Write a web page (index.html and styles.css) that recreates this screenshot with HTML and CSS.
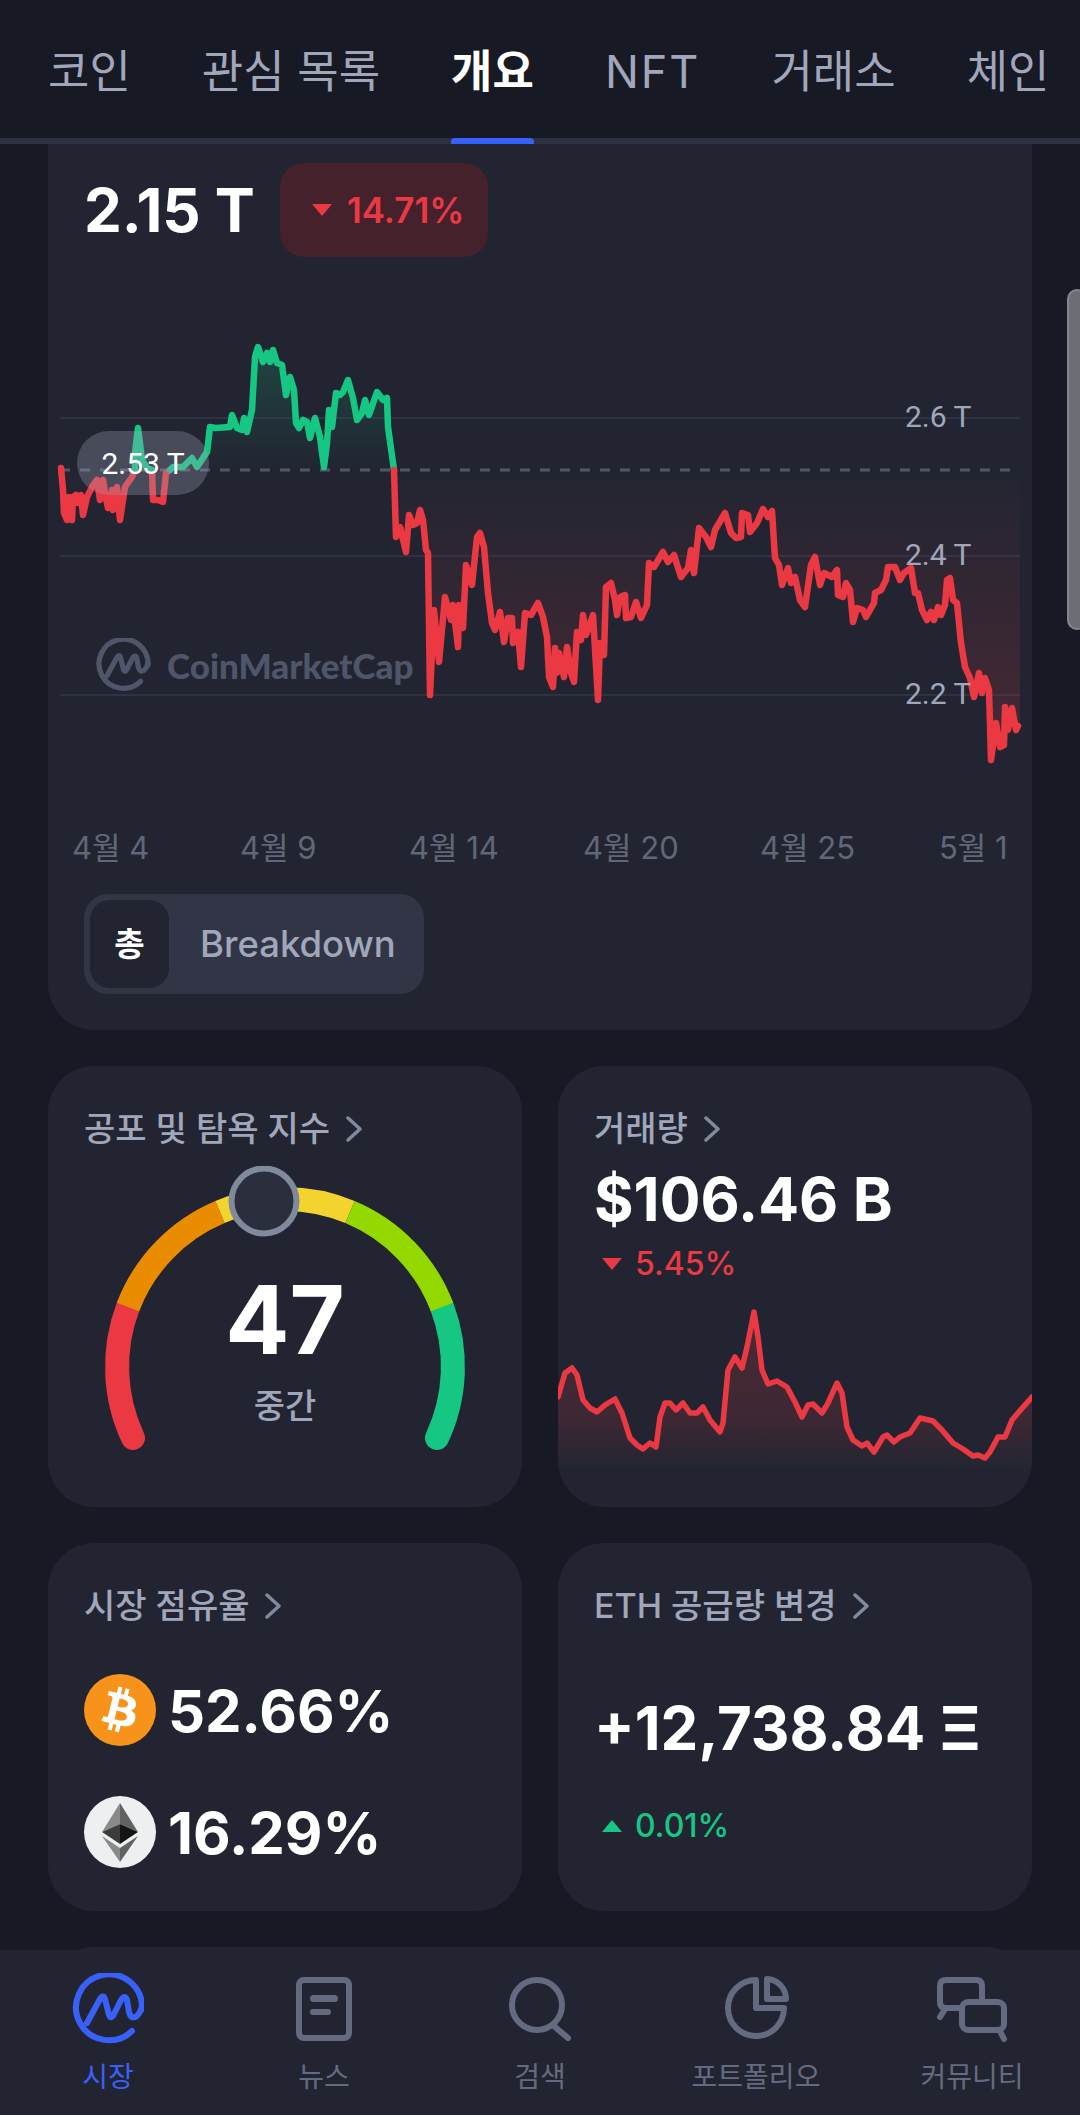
FILE: index.html
```html
<!DOCTYPE html>
<html lang="ko">
<head>
    <meta charset="UTF-8">
    <meta name="viewport" content="width=device-width, initial-scale=1.0">
    <title>개요</title>
    <link rel="stylesheet" href="styles.css">
</head>
<body>
<div class="page">
    <header class="tabs">
        <span class="tab">코인</span>
        <span class="tab">관심 목록</span>
        <span class="tab active">개요</span>
        <span class="tab latin">NFT</span>
        <span class="tab">거래소</span>
        <span class="tab">체인</span>
    </header>

    <main class="content">
        <section class="card cap-card">
            <div class="cap-head">
                <span class="cap-value">2.15 T</span>
                <span class="badge">
                    <svg class="tri" viewBox="0 0 22 14"><path d="M1 1H21L11 13Z" fill="#ea3943"/></svg>
                    14.71%
                </span>
            </div>

            <div class="chart">
                <svg class="chart-svg" viewBox="48 290 984 500">
                    <defs>
                        <linearGradient id="fillRed" gradientUnits="userSpaceOnUse" x1="0" y1="470" x2="0" y2="780">
                            <stop offset="0" stop-color="#ea3943" stop-opacity="0"/>
                            <stop offset="1" stop-color="#ea3943" stop-opacity=".2"/>
                        </linearGradient>
                        <linearGradient id="fillGreen" gradientUnits="userSpaceOnUse" x1="0" y1="347" x2="0" y2="470">
                            <stop offset="0" stop-color="#16c784" stop-opacity=".2"/>
                            <stop offset="1" stop-color="#16c784" stop-opacity="0"/>
                        </linearGradient>
                    </defs>
                    <g class="grid-lines">
                        <line x1="60" y1="418" x2="1020" y2="418"/>
                        <line x1="60" y1="556" x2="1020" y2="556"/>
                        <line x1="60" y1="695" x2="1020" y2="695"/>
                    </g>
                    <!-- red fill / green fill, then the lines -->
                    <polygon fill="url(#fillRed)" points="61,470 61,468 63,490 64,513 67,520 69,497 72,520 73,497 76,495 78,503 81,495 83,515 87,497 92,487 97,480 100,500 103,480 105,493 108,508 112,490 113,510 117,487 120,520 125,487 132,477 135,470"/>
                    <polygon fill="url(#fillRed)" points="152,470 153,500 158,500 163,502 166,473 170,470"/>
                    <polygon fill="url(#fillGreen)" points="135,470 135,453 138,428 142,460 147,468 152,470"/>
                    <polygon fill="url(#fillGreen)" points="170,470 173,467 183,467 192,458 197,467 207,452 210,427 215,428 230,427 232,415 237,428 242,430 244,418 247,432 252,410 255,357 258,347 263,362 267,353 270,362 273,350 277,363 282,365 286,395 290,377 294,390 296,423 299,428 303,420 307,422 310,438 315,418 320,437 324,467 327,443 329,410 332,427 336,393 340,395 343,392 348,380 353,398 357,420 362,413 365,400 369,415 377,392 383,400 387,398 388,427 394,470"/>
                    <polygon fill="url(#fillRed)" points="394,470 396,537 400,527 406,552 409,515 413,525 417,523 420,510 423,520 426,550 428,553 430,695 434,610 439,662 445,597 451,620 453,605 458,647 459,605 463,628 466,565 472,585 477,537 480,533 484,547 488,593 492,623 495,630 500,612 504,642 508,618 512,618 513,643 518,632 521,667 525,613 531,615 538,603 543,617 547,637 549,677 553,687 555,648 557,673 559,653 564,677 567,647 571,673 574,682 577,632 581,640 583,615 586,635 593,615 598,700 600,643 604,655 606,587 611,583 615,600 617,615 620,597 625,595 626,618 631,617 636,602 641,618 647,605 649,563 654,567 663,552 668,562 674,555 681,577 688,568 691,550 694,573 699,528 706,537 711,547 715,530 725,513 731,533 736,538 741,537 742,513 748,515 750,532 757,523 763,509 768,517 772,511 775,558 779,565 782,585 788,568 791,583 795,577 800,600 805,607 811,565 815,557 820,585 824,573 832,577 837,570 838,595 843,597 846,583 850,590 853,622 857,608 863,610 866,617 874,603 875,593 881,590 886,580 888,567 895,567 900,580 904,573 911,568 915,593 918,593 922,610 927,620 931,612 934,620 938,607 941,615 945,605 947,580 950,578 953,600 957,603 961,643 965,667 970,678 974,697 979,673 982,693 985,678 989,690 991,760 996,723 1000,747 1004,745 1005,707 1008,730 1012,708 1016,730 1020,723 1020,470"/>
                    <line class="base-line" x1="60" y1="470" x2="1010" y2="470"/>
                    <polyline class="line red" points="61,468 63,490 64,513 67,520 69,497 72,520 73,497 76,495 78,503 81,495 83,515 87,497 92,487 97,480 100,500 103,480 105,493 108,508 112,490 113,510 117,487 120,520 125,487 132,477 135,470"/>
                    <polyline class="line red" points="152,470 153,500 158,500 163,502 166,473 170,470"/>
                    <polyline class="line green" points="135,470 135,453 138,428 142,460 147,468 152,470"/>
                    <polyline class="line green" points="170,470 173,467 183,467 192,458 197,467 207,452 210,427 215,428 230,427 232,415 237,428 242,430 244,418 247,432 252,410 255,357 258,347 263,362 267,353 270,362 273,350 277,363 282,365 286,395 290,377 294,390 296,423 299,428 303,420 307,422 310,438 315,418 320,437 324,467 327,443 329,410 332,427 336,393 340,395 343,392 348,380 353,398 357,420 362,413 365,400 369,415 377,392 383,400 387,398 388,427 394,470"/>
                    <polyline class="line red" points="394,470 396,537 400,527 406,552 409,515 413,525 417,523 420,510 423,520 426,550 428,553 430,695 434,610 439,662 445,597 451,620 453,605 458,647 459,605 463,628 466,565 472,585 477,537 480,533 484,547 488,593 492,623 495,630 500,612 504,642 508,618 512,618 513,643 518,632 521,667 525,613 531,615 538,603 543,617 547,637 549,677 553,687 555,648 557,673 559,653 564,677 567,647 571,673 574,682 577,632 581,640 583,615 586,635 593,615 598,700 600,643 604,655 606,587 611,583 615,600 617,615 620,597 625,595 626,618 631,617 636,602 641,618 647,605 649,563 654,567 663,552 668,562 674,555 681,577 688,568 691,550 694,573 699,528 706,537 711,547 715,530 725,513 731,533 736,538 741,537 742,513 748,515 750,532 757,523 763,509 768,517 772,511 775,558 779,565 782,585 788,568 791,583 795,577 800,600 805,607 811,565 815,557 820,585 824,573 832,577 837,570 838,595 843,597 846,583 850,590 853,622 857,608 863,610 866,617 874,603 875,593 881,590 886,580 888,567 895,567 900,580 904,573 911,568 915,593 918,593 922,610 927,620 931,612 934,620 938,607 941,615 945,605 947,580 950,578 953,600 957,603 961,643 965,667 970,678 974,697 979,673 982,693 985,678 989,690 991,760 996,723 1000,747 1004,745 1005,707 1008,730 1012,708 1016,730 1018,726"/>
                </svg>
                <span class="y-label y-26">2.6 T</span>
                <span class="y-label y-24">2.4 T</span>
                <span class="y-label y-22">2.2 T</span>
                <span class="start-pill">2.53 T</span>
                <div class="watermark">
                    <svg class="wm-logo" viewBox="0 0 74 72">
                        <path d="M70 36A33 33 0 1 0 60 58"/>
                        <path d="M15 50L28 26Q31 21 33 26L37 42Q39 47 42 41L49 27Q53 21 55 27L57 39Q59 47 65 43Q69 39 70 33"/>
                    </svg>
                    <span class="wm-text">CoinMarketCap</span>
                </div>
            </div>

            <div class="axis">
                <span>4월 4</span>
                <span>4월 9</span>
                <span>4월 14</span>
                <span>4월 20</span>
                <span>4월 25</span>
                <span>5월 1</span>
            </div>

            <div class="toggle">
                <span class="toggle-on">총</span>
                <span class="toggle-off">Breakdown</span>
            </div>
        </section>

        <div class="row row-tall">
            <section class="card gauge-card">
                <h2 class="card-title">공포 및 탐욕 지수
                    <svg class="chev" viewBox="0 0 16 26"><path d="M2 2L14 13L2 24" /></svg>
                </h2>
                <div class="gauge">
                    <svg class="gauge-svg" viewBox="48 1166 474 300">
                        <g fill="none" stroke-width="24">
                            <path d="M133 1438A168 168 0 0 1 128 1307" stroke="#ea3943" stroke-linecap="round"/>
                            <path d="M437 1438A168 168 0 0 0 442 1307" stroke="#16c784" stroke-linecap="round"/>
                            <path d="M128 1307A168 168 0 0 1 220 1212" stroke="#ea8c00"/>
                            <path d="M220 1212A168 168 0 0 1 350 1212" stroke="#f3d42f"/>
                            <path d="M350 1212A168 168 0 0 1 442 1307" stroke="#93d900"/>
                        </g>
                        <circle cx="264" cy="1201" r="32.5" fill="#2b2e3d" stroke="#808a9d" stroke-width="6"/>
                    </svg>
                    <div class="gauge-text">
                        <span class="gauge-num">47</span>
                        <span class="gauge-label">중간</span>
                    </div>
                </div>
            </section>

            <section class="card volume-card">
                <h2 class="card-title">거래량
                    <svg class="chev" viewBox="0 0 16 26"><path d="M2 2L14 13L2 24" /></svg>
                </h2>
                <div class="big-value">$106.46 B</div>
                <div class="change down">
                    <svg class="tri" viewBox="0 0 22 14"><path d="M1 1H21L11 13Z" fill="#ea3943"/></svg>
                    5.45%
                </div>
                <svg class="spark" viewBox="558 1300 474 207">
                    <defs>
                        <linearGradient id="sparkFill" gradientUnits="userSpaceOnUse" x1="0" y1="1330" x2="0" y2="1470">
                            <stop offset="0" stop-color="#ea3943" stop-opacity=".2"/>
                            <stop offset=".65" stop-color="#ea3943" stop-opacity=".13"/>
                            <stop offset="1" stop-color="#ea3943" stop-opacity="0"/>
                        </linearGradient>
                    </defs>
                    <polygon fill="url(#sparkFill)" points="558,1470 558,1397 565,1373 572,1368 577,1375 583,1400 590,1408 597,1412 605,1405 615,1399 622,1413 630,1438 637,1445 643,1449 650,1443 656,1447 660,1417 665,1403 670,1403 676,1410 683,1403 690,1413 697,1413 703,1407 710,1420 720,1432 723,1423 728,1370 735,1357 742,1368 747,1347 754,1312 758,1337 762,1370 768,1384 777,1381 787,1387 795,1402 802,1417 808,1405 813,1404 822,1413 828,1403 837,1383 842,1393 847,1427 853,1440 862,1446 867,1443 874,1452 883,1437 887,1435 894,1442 900,1437 910,1433 920,1418 933,1421 942,1430 953,1443 963,1449 973,1456 978,1455 985,1458 990,1452 998,1437 1005,1437 1012,1420 1018,1413 1032,1397 1032,1470"/>
                    <polyline class="spark-line" points="558,1397 565,1373 572,1368 577,1375 583,1400 590,1408 597,1412 605,1405 615,1399 622,1413 630,1438 637,1445 643,1449 650,1443 656,1447 660,1417 665,1403 670,1403 676,1410 683,1403 690,1413 697,1413 703,1407 710,1420 720,1432 723,1423 728,1370 735,1357 742,1368 747,1347 754,1312 758,1337 762,1370 768,1384 777,1381 787,1387 795,1402 802,1417 808,1405 813,1404 822,1413 828,1403 837,1383 842,1393 847,1427 853,1440 862,1446 867,1443 874,1452 883,1437 887,1435 894,1442 900,1437 910,1433 920,1418 933,1421 942,1430 953,1443 963,1449 973,1456 978,1455 985,1458 990,1452 998,1437 1005,1437 1012,1420 1018,1413 1032,1397"/>
                </svg>
            </section>
        </div>

        <div class="row row-short">
            <section class="card share-card">
                <h2 class="card-title">시장 점유율
                    <svg class="chev" viewBox="0 0 16 26"><path d="M2 2L14 13L2 24" /></svg>
                </h2>
                <div class="share-row">
                    <svg class="coin" viewBox="0 0 64 64">
                        <circle cx="32" cy="32" r="32" fill="#f7931a"/>
                        <path fill="#fff" d="M46.1 27.4c.6-4.3-2.6-6.6-7.1-8.1l1.5-5.8-3.5-.9-1.4 5.7c-.9-.2-1.9-.4-2.8-.7l1.4-5.7-3.6-.9-1.4 5.8c-.8-.2-1.5-.3-2.3-.5l-4.9-1.2-.9 3.8s2.6.6 2.6.6c1.4.4 1.7 1.3 1.6 2l-1.6 6.6c.1 0 .2.1.4.1-.1 0-.2-.1-.4-.1l-2.3 9.2c-.2.4-.6 1.1-1.6.8 0 0-2.6-.6-2.6-.6l-1.8 4.1 4.6 1.2c.9.2 1.7.4 2.5.6l-1.5 5.9 3.5.9 1.5-5.8c1 .3 1.9.5 2.8.7l-1.4 5.8 3.6.9 1.5-5.9c6.1 1.2 10.6.7 12.6-4.8 1.6-4.4-.1-7-3.3-8.7 2.3-.5 4.1-2.1 4.6-5.2zM38 38.8c-1.1 4.4-8.6 2-11 1.4l2-7.8c2.4.6 10.2 1.8 9 6.4zm1.1-11.4c-1 4-7.2 2-9.2 1.5l1.8-7.1c2 .5 8.5 1.4 7.4 5.6z"/>
                    </svg>
                    <span class="share-value">52.66%</span>
                </div>
                <div class="share-row">
                    <svg class="coin" viewBox="0 0 72 72">
                        <circle cx="36" cy="36" r="36" fill="#ecf0f1"/>
                        <path fill="#8a8a8a" d="M36 7L18 36L36 28Z"/>
                        <path fill="#626262" d="M36 7L54 36L36 28Z"/>
                        <path fill="#3c3c3b" d="M18 36L36 48V28Z"/>
                        <path fill="#141414" d="M54 36L36 48V28Z"/>
                        <path fill="#8a8a8a" d="M18 40L36 66V52Z"/>
                        <path fill="#626262" d="M54 40L36 66V52Z"/>
                    </svg>
                    <span class="share-value">16.29%</span>
                </div>
            </section>

            <section class="card supply-card">
                <h2 class="card-title">ETH 공급량 변경
                    <svg class="chev" viewBox="0 0 16 26"><path d="M2 2L14 13L2 24" /></svg>
                </h2>
                <div class="supply-value">+12,738.84 Ξ</div>
                <div class="change up">
                    <svg class="tri" viewBox="0 0 22 14"><path d="M1 13H21L11 1Z" fill="#16c784"/></svg>
                    0.01%
                </div>
            </section>
        </div>

        <section class="card next-card"></section>
    </main>

    <nav class="bottom-nav">
        <a class="nav-item active">
            <svg class="nav-icon" viewBox="0 0 72 72">
                <path d="M70 36A33 33 0 1 0 60 58"/>
                <path d="M15 50L28 26Q31 21 33 26L37 42Q39 47 42 41L49 27Q53 21 55 27L57 39Q59 47 65 43Q69 39 70 33"/>
            </svg>
            <span>시장</span>
        </a>
        <a class="nav-item">
            <svg class="nav-icon" viewBox="0 0 72 72">
                <rect x="11" y="7" width="50" height="58" rx="5"/>
                <path class="thick" d="M25.5 25.5H46.5"/>
                <path d="M25 39H40"/>
            </svg>
            <span>뉴스</span>
        </a>
        <a class="nav-item">
            <svg class="nav-icon" viewBox="0 0 72 72">
                <circle cx="33" cy="32" r="25"/>
                <path d="M51 54L64 65"/>
            </svg>
            <span>검색</span>
        </a>
        <a class="nav-item">
            <svg class="nav-icon" viewBox="0 0 72 72">
                <path d="M36 7A28 28 0 1 0 64 35H36Z"/>
                <path d="M47 6A20 20 0 0 1 66 26H47Z"/>
            </svg>
            <span>포트폴리오</span>
        </a>
        <a class="nav-item">
            <svg class="nav-icon" viewBox="0 0 72 72">
                <path d="M46 26V13Q46 7 40 7H10Q4 7 4 13V29Q4 35 10 35H23"/>
                <path d="M9 36L4 44"/>
                <rect x="26" y="29" width="42" height="28" rx="6"/>
                <path d="M64 58L68 66"/>
            </svg>
            <span>커뮤니티</span>
        </a>
    </nav>

    <div class="scroll-handle"></div>
</div>
</body>
</html>
```

FILE: styles.css
```css
* {
    box-sizing: border-box;
}
body {
    margin: 0;
    background: #171924;
    font-family: Inter, "Noto Sans CJK KR", sans-serif;
    color: #fff;
}
.page {
    position: relative;
    width: 1080px;
    height: 2115px;
    display: flex;
    flex-direction: column;
    overflow: hidden;
    background: #171924;
}

/* top tabs */
.tabs {
    flex: none;
    height: 144px;
    display: flex;
    gap: 71px;
    padding-left: 48px;
    border-bottom: 6px solid #2e3142;
    white-space: nowrap;
}
.tab {
    position: relative;
    height: 138px;
    line-height: 144px;
    font-size: 45px;
    color: #a1a7bb;
}
.tab.latin {
    letter-spacing: 2px;
}
.tab.active {
    color: #fff;
    font-weight: 700;
}
.tab.active::after {
    content: "";
    position: absolute;
    left: 0;
    right: 0;
    bottom: -6px;
    height: 6px;
    background: #3861fb;
    border-radius: 4px 4px 0 0;
}

/* cards */
.content {
    flex: 1;
    min-height: 0;
    padding: 0 48px;
    display: flex;
    flex-direction: column;
    gap: 36px;
    overflow: hidden;
}
.card {
    position: relative;
    background: #222531;
    border-radius: 46px;
    overflow: hidden;
}
.cap-card {
    flex: none;
    height: 886px;
    border-radius: 0 0 46px 46px;
    padding-top: 19px;
}
.cap-head {
    display: flex;
    align-items: center;
    gap: 25px;
    padding-left: 36px;
}
.cap-value {
    font-size: 60px;
    font-weight: 700;
}
.badge {
    display: flex;
    align-items: center;
    gap: 14px;
    height: 94px;
    padding: 0 24px 0 31px;
    background: #44212b;
    border-radius: 24px;
    color: #ea3943;
    font-size: 35px;
    font-weight: 600;
}
.tri {
    width: 22px;
    height: 14px;
    flex: none;
}

/* main chart */
.chart {
    position: relative;
    height: 500px;
    margin-top: 33px;
}
.chart-svg {
    display: block;
    width: 984px;
    height: 500px;
}
.grid-lines line {
    stroke: #2e3242;
    stroke-width: 2;
}
.base-line {
    stroke: #50566a;
    stroke-width: 3;
    stroke-dasharray: 10 10;
}
.line {
    fill: none;
    stroke-width: 6.5;
    stroke-linejoin: round;
    stroke-linecap: round;
}
.line.red {
    stroke: #ea3943;
}
.line.green {
    stroke: #16c784;
}
.y-label {
    position: absolute;
    left: 857px;
    font-family: Roboto, sans-serif;
    font-size: 30px;
    line-height: 36px;
    color: #a1a7bb;
}
.y-26 {
    top: 109px;
}
.y-24 {
    top: 247px;
}
.y-22 {
    top: 386px;
}
.start-pill {
    position: absolute;
    left: 29px;
    top: 141px;
    width: 132px;
    height: 64px;
    border-radius: 32px;
    background: rgba(161, 167, 187, .3);
    font-family: Roboto, sans-serif;
    font-size: 30px;
    line-height: 66px;
    text-align: center;
    color: #fff;
}
.watermark {
    position: absolute;
    left: 48px;
    top: 348px;
    display: flex;
    align-items: center;
    gap: 16px;
}
.wm-logo {
    width: 55px;
    height: 54px;
    fill: none;
    stroke: #50566a;
    stroke-width: 7;
    stroke-linecap: round;
    stroke-linejoin: round;
}
.wm-text {
    font-family: Lato, sans-serif;
    font-size: 35px;
    font-weight: 900;
    color: #50566a;
}

.axis {
    display: grid;
    grid-template-columns: 168px 169px 174px 177px 179px auto;
    margin-top: 38px;
    padding-left: 24px;
    font-size: 31px;
    line-height: 40px;
    color: #616779;
}

.toggle {
    display: flex;
    align-items: center;
    width: 340px;
    height: 100px;
    margin: 26px 0 0 36px;
    padding: 6px;
    background: #323546;
    border-radius: 24px;
}
.toggle-on {
    width: 79px;
    height: 88px;
    background: #222531;
    border-radius: 20px;
    font-size: 33px;
    font-weight: 700;
    line-height: 88px;
    text-align: center;
}
.toggle-off {
    margin-left: 31px;
    font-size: 36.5px;
    font-weight: 500;
    color: #a1a7bb;
}

.row {
    flex: none;
    display: grid;
    grid-template-columns: 474px 474px;
    gap: 36px;
}
.row-tall {
    height: 441px;
}
.row-short {
    height: 368px;
}
.next-card {
    flex: none;
    height: 200px;
}

.card-title {
    display: flex;
    align-items: center;
    gap: 16px;
    margin: 0;
    padding: 43px 0 0 36px;
    font-size: 34px;
    line-height: 40px;
    font-weight: 500;
    color: #a1a7bb;
}
.chev {
    width: 16px;
    height: 26px;
    fill: none;
    stroke: #808a9d;
    stroke-width: 3.5;
    stroke-linecap: round;
    stroke-linejoin: round;
}

/* gauge */
.gauge {
    position: absolute;
    left: 0;
    top: 100px;
    width: 474px;
    height: 300px;
}
.gauge-svg {
    display: block;
    width: 474px;
    height: 300px;
}
.gauge-text {
    position: absolute;
    left: 0;
    right: 0;
    top: 99px;
    display: flex;
    flex-direction: column;
    align-items: center;
}
.gauge-num {
    font-size: 95px;
    line-height: 110px;
    font-weight: 700;
}
.gauge-label {
    margin-top: 11px;
    font-size: 34px;
    line-height: 40px;
    font-weight: 500;
    color: #a1a7bb;
}

/* volume */
.big-value {
    padding-left: 36px;
    margin-top: 14px;
    font-size: 60.5px;
    line-height: 72px;
    font-weight: 700;
}
.change {
    display: flex;
    align-items: center;
    gap: 12px;
    padding-left: 43px;
    font-size: 32px;
    line-height: 40px;
    font-weight: 500;
}
.change.down {
    color: #ea3943;
    margin-top: 9px;
}
.change.up {
    color: #16c784;
    margin-top: 42px;
}
.spark {
    position: absolute;
    left: 0;
    bottom: 0;
    width: 474px;
    height: 207px;
}
.spark-line {
    fill: none;
    stroke: #ea3943;
    stroke-width: 5.5;
    stroke-linejoin: round;
    stroke-linecap: round;
}

/* market share */
.share-row {
    display: flex;
    align-items: center;
    gap: 12px;
    margin: 48px 0 0 36px;
}
.share-row + .share-row {
    margin-top: 50px;
}
.coin {
    width: 72px;
    height: 72px;
    flex: none;
}
.share-value {
    height: 72px;
    font-size: 58px;
    line-height: 75px;
    font-weight: 700;
}
.supply-value {
    margin-top: 66px;
    padding-left: 36px;
    font-size: 60px;
    line-height: 72px;
    font-weight: 700;
}

/* bottom nav */
.bottom-nav {
    position: absolute;
    left: 0;
    right: 0;
    bottom: 0;
    height: 165px;
    padding-top: 23px;
    display: grid;
    grid-template-columns: repeat(5, 216px);
    background: #222531;
}
.nav-item {
    display: flex;
    flex-direction: column;
    align-items: center;
    gap: 14px;
    font-size: 28px;
    line-height: 36px;
    color: #646b80;
}
.nav-item.active {
    color: #3861fb;
}
.nav-icon {
    width: 72px;
    height: 72px;
    fill: none;
    stroke: #646b80;
    stroke-width: 6;
    stroke-linecap: round;
    stroke-linejoin: round;
}
.nav-item.active .nav-icon {
    stroke: #3861fb;
}
.nav-icon .thick {
    stroke-width: 7;
}

.scroll-handle {
    position: absolute;
    left: 1067px;
    top: 289px;
    width: 20px;
    height: 341px;
    background: #6b6e75;
    border: 2px solid #85878d;
    border-radius: 11px;
}
```
